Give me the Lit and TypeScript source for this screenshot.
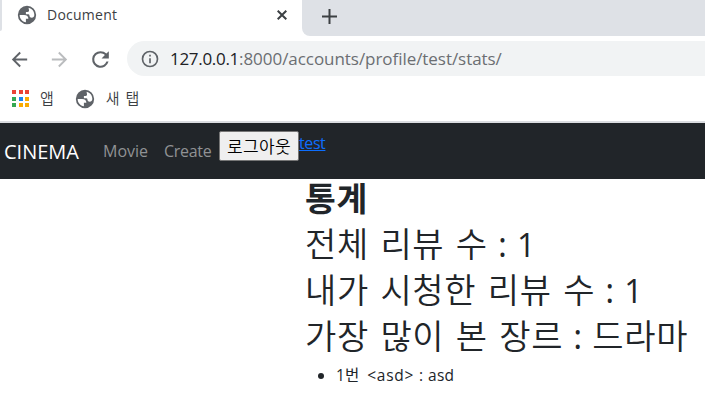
import { LitElement, html, css, svg } from "lit";
import { customElement } from "lit/decorators.js";

const GLOBE = svg`<path fill-rule="evenodd" d="M12 2a10 10 0 1 0 0 20 10 10 0 0 0 0-20zM4 12H8.800c3.200 0 4.700 1.500 4.700 4.200H10.800v3.700C6.900 19.400 4 16.100 4 12zM13.800 4.200C17.500 5.100 20 8.200 20 12c-.2 2-1.200 3-2.800 3-1.900 0-2.400-1-2.600-2.600-.1-1-.6-1.300-1.600-1.300h-2.200V8.600h1.800c1.300 0 1.600-.7 1.600-1.600 0-.7-.4-1.200-.4-2.800z"/>`;
const BACK = svg`<path d="M20 11H7.830l5.590-5.590L12 4l-8 8 8 8 1.410-1.410L7.830 13H20v-2z"/>`;
const FORWARD = svg`<path d="M12 4l-1.410 1.410L16.170 11H4v2h12.170l-5.580 5.590L12 20l8-8z"/>`;
const RELOAD = svg`<path d="M17.650 6.350A7.960 7.960 0 0 0 12 4a8 8 0 1 0 7.730 10h-2.080A6 6 0 1 1 12 6c1.660 0 3.140.69 4.220 1.780L13 11h7V4l-2.350 2.350z"/>`;
const INFO = svg`<path d="M11 7h2v2h-2zm0 4h2v6h-2zm1-9a10 10 0 1 0 0 20 10 10 0 0 0 0-20zm0 18a8 8 0 1 1 0-16 8 8 0 0 1 0 16z"/>`;

const icon = (shape: unknown, name: string) =>
  html`<svg class="icon ${name}" viewBox="0 0 24 24" aria-hidden="true">${shape}</svg>`;

@customElement("browser-chrome")
class BrowserChrome extends LitElement {
  static styles = css`
    :host { display: block; height: 123px; background: #fff; color: #3c4043;
      font-family: "Open Sans", "Noto Sans CJK KR", sans-serif; }
    .icon { display: block; fill: #5f6368; flex: none; }
    .strip { display: flex; height: 36px; background: #dee1e6; }
    .front { display: flex; width: 302px; background: #fff; }
    .lead { width: 2px; height: 31px; background: #dee1e6; border-bottom-right-radius: 2px; }
    .tab { flex: 1; display: flex; align-items: center; height: 30px; padding-left: 14px; }
    .globe { width: 22px; height: 22px; }
    .title { margin-left: 9px; font-size: 14px; letter-spacing: 0.25px; line-height: 20px; }
    .close { width: 10px; height: 10px; margin-left: auto; margin-right: 15px; }
    .rest { flex: 1; background: #dee1e6; border-bottom-left-radius: 8px; padding: 7px 0 0 20px; }
    .front-bg { display: flex; flex: 1; background: #fff; }
    .plus { width: 15px; height: 15px; }
    .stroke { fill: none; stroke: #3c4043; stroke-width: 2; }
    .toolbar { display: flex; align-items: center; height: 46px; padding-left: 8px; }
    .back, .forward { width: 23px; height: 23px; margin-right: 17px; }
    .forward { fill: #babcbe; }
    .reload { width: 25px; height: 25px; }
    .address { flex: 1; align-self: flex-start; margin: 5px 0 0 14px; height: 35px; background: #f1f3f4;
      border-radius: 18px 0 0 18px; display: flex; align-items: center; padding-left: 13px; }
    .info { width: 20px; height: 20px; }
    .url { margin-left: 10px; font-size: 17px; line-height: 24px; color: #6b6e72; white-space: pre;
      letter-spacing: -0.050px; }
    .host { color: #202124; letter-spacing: -0.300px; }
    .bookmarks { display: flex; align-items: center; height: 33px; padding-left: 12px; font-size: 15px; }
    .apps { display: grid; grid-template-columns: repeat(3, 4px); gap: 2.500px; grid-auto-rows: 4px; }
    .apps i:nth-child(-n + 3) { background: #ea4335; }
    .apps i:nth-child(n + 4) { background: #34a853; }
    .apps i:nth-child(5) { background: #1a86f0; }
    .apps i:nth-child(6), .apps i:nth-child(n + 8) { background: #f9ab00; }
    .label { margin: -2px 0 0 11px; line-height: 20px; word-spacing: 2px; font-weight: 350; }
    .second { margin-left: 20px; }
    .second + .label { margin-left: 10px; }
    .rule { margin-top: 6px; height: 2px; background: #dadce0; }
  `;
  render() {
    return html`
      <div class="strip">
        <div class="front">
          <div class="lead"></div>
          <div class="tab">
            ${icon(GLOBE, "globe")}<span class="title">Document</span>
            <svg class="close stroke" viewBox="0 0 10 10"><path d="M.7.7l8.600 8.600M9.300.7L.7 9.300" /></svg>
          </div>
        </div>
        <div class="front-bg">
          <div class="rest"><svg class="plus stroke" viewBox="0 0 15 15"><path d="M7.500 0v15M0 7.500h15" /></svg></div>
        </div>
      </div>
      <div class="toolbar">
        ${icon(BACK, "back")}${icon(FORWARD, "forward")}${icon(RELOAD, "reload")}
        <div class="address">${icon(INFO, "info")}<span class="url"><span class="host">127.0.0.1</span>:8000/accounts/profile/test/stats/</span></div>
      </div>
      <div class="bookmarks">
        <div class="apps">${Array.from({ length: 9 }, () => html`<i></i>`)}</div>
        <span class="label">앱</span>
        <span class="second">${icon(GLOBE, "globe")}</span>
        <span class="label">새 탭</span>
      </div>
      <div class="rule"></div>
    `;
  }
}

@customElement("site-nav")
class SiteNav extends LitElement {
  static styles = css`
    :host { display: flex; height: 56px; background: #212529; padding-left: 4px; box-sizing: border-box;
      font-family: "Open Sans", "Noto Sans CJK KR", sans-serif; }
    a { line-height: 24px; }
    .brand { color: #fff; font-size: 20px; width: 99px; margin-top: 17px; }
    .link { color: #909294; font-size: 16px; margin-top: 16px; }
    .movie { width: 61px; }
    .create { width: 55px; letter-spacing: -0.3px; }
    button { margin: 8px 0 0; width: 80px; height: 30px; padding: 0; border: 1px solid #767676;
      border-radius: 2px; background: #efefef; color: #000; font: 350 17px/24px "Noto Sans CJK KR", sans-serif;
      letter-spacing: 0.400px; }
    .user { color: #0d6efd; font-size: 16px; letter-spacing: -0.4px; margin-top: 8px; text-decoration: underline; }
  `;
  render() {
    return html`<a class="brand">CINEMA</a><a class="link movie">Movie</a><a class="link create">Create</a>
      <button>로그아웃</button><a class="user">test</a>`;
  }
}

@customElement("app-root")
class AppRoot extends LitElement {
  static styles = css`
    :host { display: block; height: 405px; overflow: hidden; background: #fff; color: #212529; }
    .stats { padding-left: 305px; font-family: "Open Sans", "Noto Sans CJK KR", sans-serif; }
    h1, p { margin: 0; height: 46px; line-height: 38px; font-size: 34px; white-space: pre; }
    h1 { font-weight: 700; font-size: 33.500px; letter-spacing: 0.6px; }
    p { font-weight: 350; letter-spacing: 0.7px; word-spacing: 1.900px; }
    p .sep { font-weight: 400; word-spacing: 1.300px; letter-spacing: 0; }
    .count { font-size: 32px; font-weight: 400; }
    ul { margin: 0; padding-left: 31px; font-size: 15.500px; line-height: 24px; letter-spacing: 0.2px;
      word-spacing: 3.500px; }
    .tag { letter-spacing: 0.700px; }
    ul .sep { word-spacing: 1px; letter-spacing: 0; }
  `;
  render() {
    const sep = html`<span class="sep"> : </span>`;
    return html`
      <browser-chrome></browser-chrome>
      <site-nav></site-nav>
      <div class="stats">
        <h1>통계</h1>
        <p>전체 리뷰 수${sep}<span class="count">1</span></p>
        <p>내가 시청한 리뷰 수${sep}<span class="count">1</span></p>
        <p>가장 많이 본 장르${sep}드라마</p>
        <ul><li>1번 <span class="tag">&lt;asd&gt;</span>${sep}asd</li></ul>
      </div>
    `;
  }
}
